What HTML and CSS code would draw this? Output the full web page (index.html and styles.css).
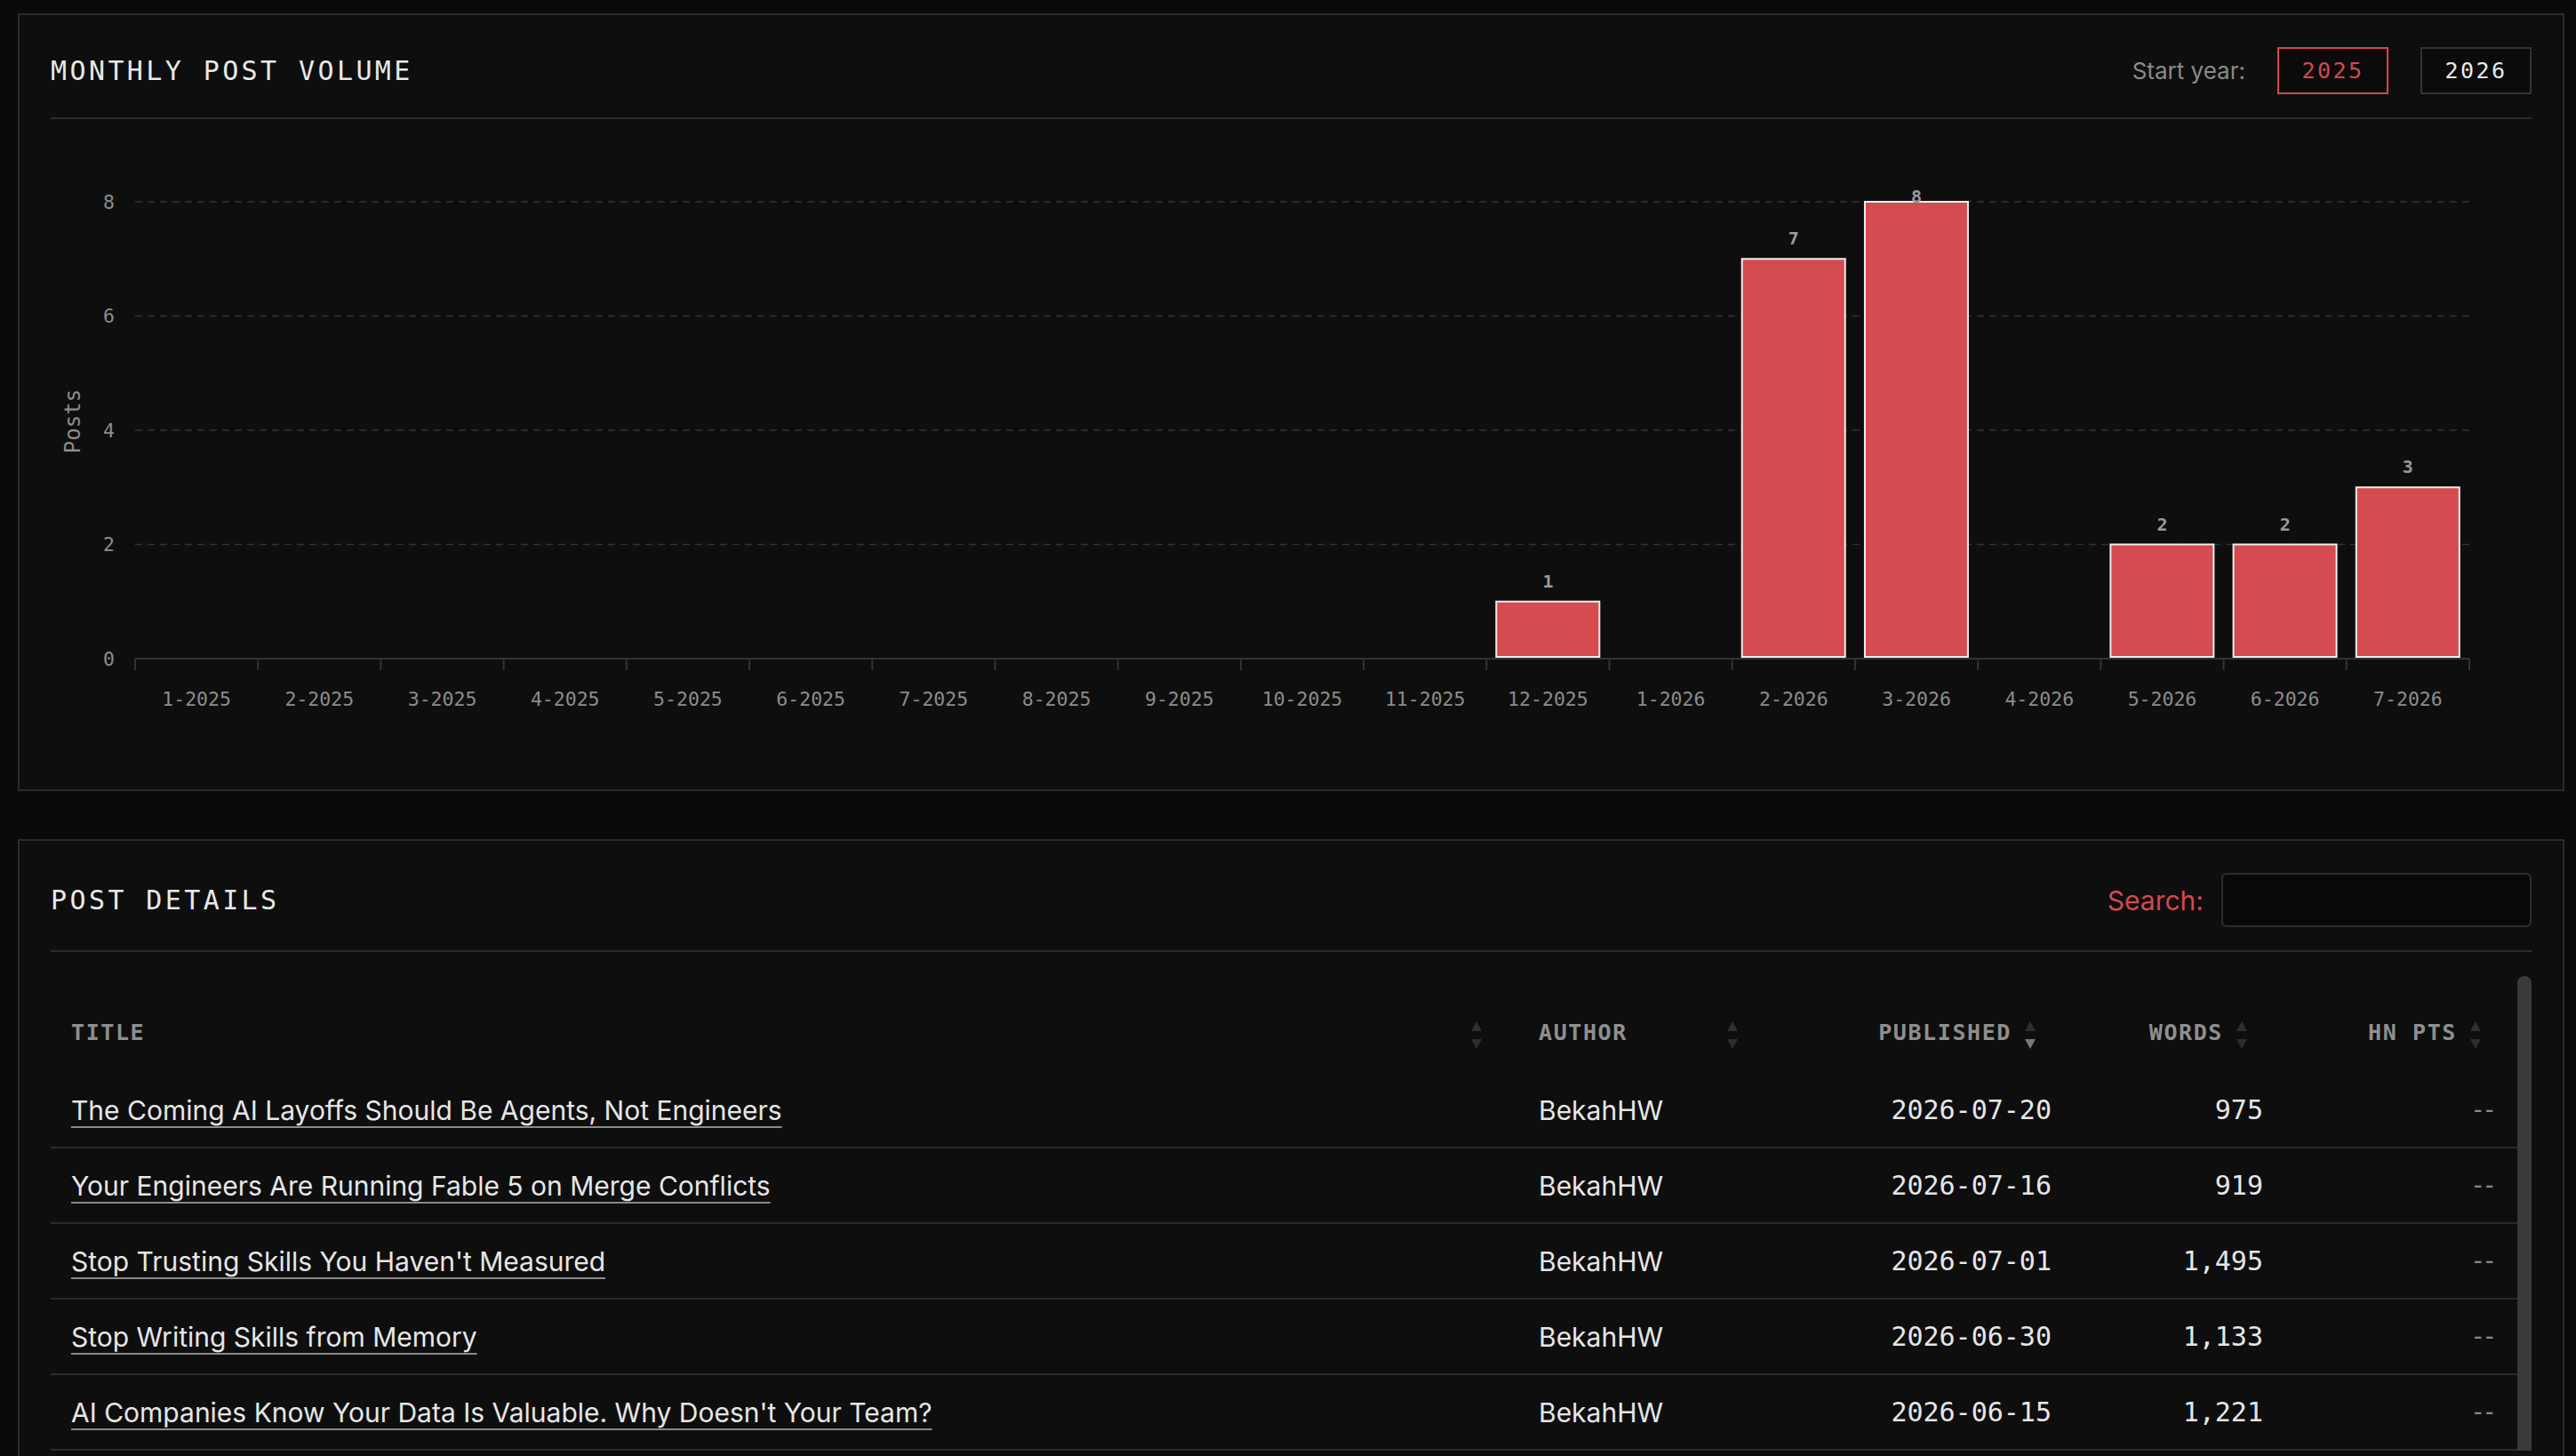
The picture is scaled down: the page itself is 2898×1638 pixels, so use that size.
FILE: index.html
```html
<!DOCTYPE html>
<html lang="en">
<head>
    <meta charset="UTF-8">
    <title>Post Stats</title>
    <link rel="stylesheet" href="styles.css">
</head>
<body>
    <section class="panel">
        <div class="panel-head">
            <h2>Monthly Post Volume</h2>
            <div class="year-pick">
                <span class="pick-label">Start year:</span>
                <button class="year active">2025</button>
                <button class="year">2026</button>
            </div>
        </div>
        <svg id="chart" class="chart" width="2791" height="718"></svg>
    </section>

    <section class="panel">
        <div class="panel-head">
            <h2>Post Details</h2>
            <label class="search">Search: <input type="text"></label>
        </div>
        <div class="table-area">
            <div class="table-wrap">
                <table>
                    <colgroup>
                        <col style="width: 1651px">
                        <col style="width: 288px">
                        <col style="width: 335px">
                        <col style="width: 238px">
                        <col style="width: 263px">
                    </colgroup>
                    <thead>
                        <tr>
                            <th>Title<span class="sort"></span></th>
                            <th>Author<span class="sort"></span></th>
                            <th class="num">Published<span class="sort desc"></span></th>
                            <th class="num">Words<span class="sort"></span></th>
                            <th class="num">HN Pts<span class="sort"></span></th>
                        </tr>
                    </thead>
                    <tbody>
                        <tr>
                            <td><a href="#">The Coming AI Layoffs Should Be Agents, Not Engineers</a></td>
                            <td>BekahHW</td>
                            <td class="num mono">2026-07-20</td>
                            <td class="num mono">975</td>
                            <td class="num mono dim">--</td>
                        </tr>
                        <tr>
                            <td><a href="#">Your Engineers Are Running Fable 5 on Merge Conflicts</a></td>
                            <td>BekahHW</td>
                            <td class="num mono">2026-07-16</td>
                            <td class="num mono">919</td>
                            <td class="num mono dim">--</td>
                        </tr>
                        <tr>
                            <td><a href="#">Stop Trusting Skills You Haven't Measured</a></td>
                            <td>BekahHW</td>
                            <td class="num mono">2026-07-01</td>
                            <td class="num mono">1,495</td>
                            <td class="num mono dim">--</td>
                        </tr>
                        <tr>
                            <td><a href="#">Stop Writing Skills from Memory</a></td>
                            <td>BekahHW</td>
                            <td class="num mono">2026-06-30</td>
                            <td class="num mono">1,133</td>
                            <td class="num mono dim">--</td>
                        </tr>
                        <tr>
                            <td><a href="#">AI Companies Know Your Data Is Valuable. Why Doesn't Your Team?</a></td>
                            <td>BekahHW</td>
                            <td class="num mono">2026-06-15</td>
                            <td class="num mono">1,221</td>
                            <td class="num mono dim">--</td>
                        </tr>
                    </tbody>
                </table>
            </div>
            <div class="scroll-thumb"></div>
        </div>
    </section>

    <script>
        const months = ['1-2025', '2-2025', '3-2025', '4-2025', '5-2025', '6-2025', '7-2025',
            '8-2025', '9-2025', '10-2025', '11-2025', '12-2025', '1-2026', '2-2026', '3-2026',
            '4-2026', '5-2026', '6-2026', '7-2026'];
        const counts = [0, 0, 0, 0, 0, 0, 0, 0, 0, 0, 0, 1, 0, 7, 8, 0, 2, 2, 3];

        const svg = document.getElementById('chart');
        const ns = 'http://www.w3.org/2000/svg';
        const left = 95, right = 2721, base = 607, unit = 64.25;
        const step = (right - left) / months.length;

        function add(tag, attrs, text) {
            const el = document.createElementNS(ns, tag);
            for (const k in attrs) el.setAttribute(k, attrs[k]);
            if (text !== undefined) el.textContent = text;
            svg.appendChild(el);
            return el;
        }

        // grid + y labels
        for (let v = 0; v <= 8; v += 2) {
            const y = base - v * unit;
            if (v > 0) add('line', { x1: left, x2: right, y1: y, y2: y, class: 'grid' });
            add('text', { x: 72, y: y, class: 'tick-label', 'text-anchor': 'end' }, v);
        }

        // bars
        counts.forEach((c, i) => {
            if (!c) return;
            const top = base - c * unit;
            add('rect', { x: left + i * step + 11, y: top, width: 116, height: base - 2 - top, class: 'bar' });
            const ly = Math.max(top - 23, base - 8 * unit - 6);
            add('text', { x: left + (i + 0.5) * step, y: ly, class: 'value', 'text-anchor': 'middle' }, c);
        });

        // x axis
        add('line', { x1: left, x2: right, y1: base, y2: base, class: 'axis' });
        for (let i = 0; i <= months.length; i++) {
            const x = left + i * step;
            add('line', { x1: x, x2: x, y1: base, y2: base + 13, class: 'axis' });
        }
        months.forEach((m, i) => {
            add('text', { x: left + (i + 0.5) * step, y: 652, class: 'tick-label', 'text-anchor': 'middle' }, m);
        });

        add('text', { x: 25, y: 340, class: 'axis-title', 'text-anchor': 'middle', transform: 'rotate(-90 25 340)' }, 'Posts');
    </script>
</body>
</html>
```

FILE: styles.css
```css
html, body {
    overflow: hidden;
}
body {
    margin: 0;
    padding: 15px 13px 0 20px;
    background: #0a0a0a;
    color: #e6e6e6;
    font-family: Inter, "Noto Sans", sans-serif;
}
.panel {
    background: #0e0e0e;
    border: 2px solid #2b2b2b;
    padding: 36px 35px;
}
.panel + .panel {
    margin-top: 54px;
}
.panel-head {
    display: flex;
    justify-content: space-between;
    align-items: center;
    padding-bottom: 26px;
    border-bottom: 2px solid #2b2b2b;
}
h2 {
    margin: 0;
    font-family: "DejaVu Sans Mono", monospace;
    font-weight: normal;
    font-size: 30px;
    letter-spacing: 3.4px;
    text-transform: uppercase;
    color: #e8e8e8;
}
.year-pick {
    display: flex;
    align-items: center;
    gap: 36px;
}
.pick-label {
    color: #8a8a8a;
    font-size: 26px;
}
.year {
    width: 125px;
    height: 53px;
    padding: 0;
    background: #0b0b0b;
    border: 2px solid #333;
    color: #e8e8e8;
    font-family: "DejaVu Sans Mono", monospace;
    font-size: 25px;
    letter-spacing: 2.4px;
}
.year.active {
    border-color: #d4484e;
    color: #d4484e;
}
.search {
    display: flex;
    align-items: center;
    gap: 20px;
    color: #d4484e;
    font-size: 30px;
}
.search input {
    width: 349px;
    height: 61px;
    box-sizing: border-box;
    background: #080808;
    border: 2px solid #2e2e2e;
    border-radius: 6px;
    color: #e6e6e6;
}

/* chart */
.chart {
    display: block;
    font-family: "DejaVu Sans Mono", monospace;
}
.chart .grid {
    stroke: #333;
    stroke-width: 1.5;
    stroke-dasharray: 8 6;
}
.chart .axis {
    stroke: #333;
    stroke-width: 2;
}
.chart .bar {
    fill: #d44b50;
    stroke: #eee;
    stroke-width: 2;
}
.chart .tick-label {
    fill: #8c8c8c;
    font-size: 21.5px;
    dominant-baseline: central;
}
.chart .value {
    fill: #9a9a9a;
    font-size: 20px;
    font-weight: bold;
    dominant-baseline: central;
}
.chart .axis-title {
    fill: #8c8c8c;
    font-size: 24px;
    dominant-baseline: central;
}

/* table */
.table-area {
    display: flex;
    margin-top: 27px;
}
.table-wrap {
    flex: 1;
}
.scroll-thumb {
    width: 16px;
    background: #3a3a3a;
    border-radius: 8px 8px 0 0;
}
table {
    width: 100%;
    border-collapse: separate;
    border-spacing: 0;
    table-layout: fixed;
}
th {
    position: relative;
    padding: 52px 68px 33px 23px;
    text-align: left;
    font-family: "DejaVu Sans Mono", monospace;
    font-size: 25px;
    line-height: 24px;
    letter-spacing: 1.6px;
    font-weight: bold;
    text-transform: uppercase;
    color: #8f8f8f;
}
th.num, td.num {
    text-align: right;
}
.sort {
    position: absolute;
    right: 41px;
    top: 51px;
    width: 12px;
    height: 32px;
}
.sort::before, .sort::after {
    content: "";
    position: absolute;
    left: 0;
    border-left: 6px solid transparent;
    border-right: 6px solid transparent;
}
.sort::before {
    top: 0;
    border-bottom: 11px solid #2e2e2e;
}
.sort::after {
    top: 20px;
    border-top: 11px solid #2e2e2e;
}
.sort.desc::after {
    border-top-color: #777;
}
td {
    height: 83px;
    padding: 0 23px;
    border-bottom: 2px solid #2b2b2b;
    font-size: 30px;
    white-space: nowrap;
}
td a {
    color: #e6e6e6;
    text-decoration: underline;
    text-decoration-color: #8a8a8a;
    text-decoration-thickness: 2px;
    text-underline-offset: 7px;
}
.mono {
    font-family: "DejaVu Sans Mono", monospace;
    font-size: 30px;
}
.dim {
    color: #8a8a8a;
    font-size: 28px;
    letter-spacing: -4px;
    padding-right: 27px;
}
```
